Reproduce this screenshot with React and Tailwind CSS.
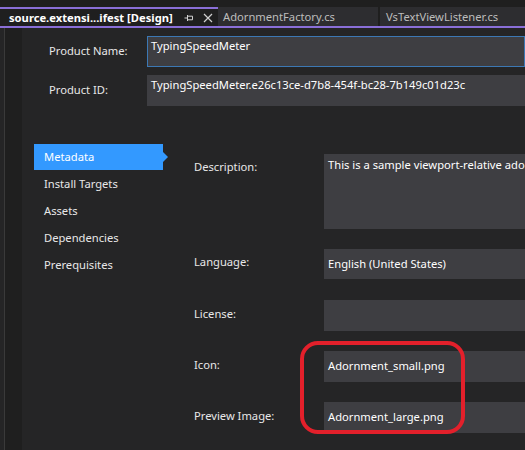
import React from "react";

const font = { fontFamily: '"Noto Sans", "Open Sans", sans-serif' };

function PinIcon() {
  return (
    <svg width="10" height="10" viewBox="0 0 10 10" className="text-[#d0d0d0]">
      <path d="M0.5 5H3.5M3.5 2V8M3.5 3.2H8.5V6.8H3.5" stroke="currentColor" strokeWidth="1" fill="none" />
    </svg>
  );
}

function CloseIcon() {
  return (
    <svg width="10" height="10" viewBox="0 0 10 10" className="text-[#d0d0d0]">
      <path d="M1 1L9 9M9 1L1 9" stroke="currentColor" strokeWidth="1.2" fill="none" />
    </svg>
  );
}

/* TAB BAR */

function Tabs() {
  return (
    <div className="flex flex-col shrink-0">
      <div className="h-[7px] bg-[#1f1f1f]" />
      <div className="flex h-[19px] bg-[#1f1f1f]">
        <div className="w-[218px] shrink-0 flex items-center border-t-2 border-[#8a6fd8] bg-[#1f1f1f] pl-[9px]">
          <span className="text-[11.2px] font-bold text-white leading-none whitespace-nowrap">
            source.extensi...ifest [Design]
          </span>
          <span className="ml-[11px] flex items-center shrink-0"><PinIcon /></span>
          <span className="ml-[9px] flex items-center shrink-0"><CloseIcon /></span>
        </div>
        <div className="w-[160px] shrink-0 flex items-center bg-[#2d2d30] pl-[5px]">
          <span className="text-[11.2px] text-[#bdbdbd] leading-none whitespace-nowrap">AdornmentFactory.cs</span>
        </div>
        <div className="w-[2px] shrink-0" />
        <div className="flex-1 min-w-0 flex items-center bg-[#2d2d30] pl-[6px]">
          <span className="text-[11.2px] text-[#bdbdbd] leading-none whitespace-nowrap">VsTextViewListener.cs</span>
        </div>
      </div>
      <div className="h-[2px] bg-[#8a6fd8]" />
    </div>
  );
}

function Field({ label, value, height = 31, center = true, mt = 20, labelTop = false }) {
  return (
    <div className="flex" style={{ marginTop: mt }}>
      <div
        className={`w-[130px] shrink-0 text-[11.2px] text-[#e8e8e8] flex ${labelTop ? "items-start pt-[5px]" : "items-center pb-[3px]"}`}
        style={{ height }}
      >
        {label}
      </div>
      <div
        className={`flex-1 min-w-0 bg-[#3e3e42] text-[11.2px] text-white pl-[4px] whitespace-nowrap overflow-hidden flex ${center ? "items-center" : "items-start pt-[3px]"}`}
        style={{ height }}
      >
        {value}
      </div>
    </div>
  );
}

const navItems = ["Install Targets", "Assets", "Dependencies", "Prerequisites"];

export default function App() {
  return (
    <div className="w-[525px] h-[450px] bg-[#252526] overflow-hidden flex flex-col" style={font}>
      <Tabs />
      <div className="flex flex-1 min-h-0">
        {/* LEFT GUTTER */}
        <div className="w-[4px] shrink-0 bg-[#252526]" />
        <div className="w-[1px] shrink-0 bg-[#3a3a3a]" />
        <div className="w-[17px] shrink-0 bg-[#1f1f1f]" />

        <div className="flex-1 min-w-0 flex flex-col">
          {/* TOP FIELDS */}
          <div className="flex flex-col pt-[8px] pl-[27px]">
            <div className="flex h-[31px]">
              <div className="w-[98px] shrink-0 flex items-center text-[11.2px] text-[#e8e8e8]">Product Name:</div>
              <div className="flex-1 min-w-0 bg-[#3e3e42] border border-[#3c78b4] text-[11.2px] text-white pl-[3px] pt-[1px] whitespace-nowrap overflow-hidden">
                TypingSpeedMeter
              </div>
            </div>
            <div className="flex h-[31px] mt-[8px]">
              <div className="w-[98px] shrink-0 flex items-center pb-[1px] text-[11.2px] text-[#e8e8e8]">Product ID:</div>
              <div className="flex-1 min-w-0 bg-[#3e3e42] text-[11.2px] text-white pl-[4px] pt-[2px] whitespace-nowrap overflow-hidden">
                TypingSpeedMeter.e26c13ce-d7b8-454f-bc28-7b149c01d23c
              </div>
            </div>
          </div>

          {/* LOWER SECTION */}
          <div className="flex mt-[38px]">
            <div className="w-[172px] shrink-0 pl-[12px] flex flex-col">
              <div className="flex h-[26px]">
                <div className="w-[129px] bg-[#3399ff] flex items-center pl-[10px] text-[11.2px] text-white">Metadata</div>
                <svg width="5" height="26" viewBox="0 0 5 26">
                  <path d="M0 8L5 13L0 18Z" fill="#3399ff" />
                </svg>
              </div>
              <div className="mt-[1px]">
                {navItems.map((item) => (
                  <div key={item} className="h-[27px] flex items-center pl-[10px] text-[11.2px] text-[#e8e8e8]">
                    {item}
                  </div>
                ))}
              </div>
            </div>

            <div className="flex-1 min-w-0 flex flex-col pt-[10px] relative">
              <Field
                label="Description:"
                value="This is a sample viewport-relative adornment"
                height={75}
                center={false}
                mt={0}
                labelTop
              />
              <Field label="Language:" value="English (United States)" mt={20} height={30} />
              <Field label="License:" value="" mt={21} />
              <Field label="Icon:" value="Adornment_small.png" mt={20} />
              <Field label="Preview Image:" value="Adornment_large.png" mt={20} />

              {/* RED HIGHLIGHT */}
              <div className="absolute left-[106px] top-[197px] w-[165px] h-[93px] border-[4px] border-[#e3202b] rounded-[18px] pointer-events-none" />
            </div>
          </div>
        </div>
      </div>
    </div>
  );
}
